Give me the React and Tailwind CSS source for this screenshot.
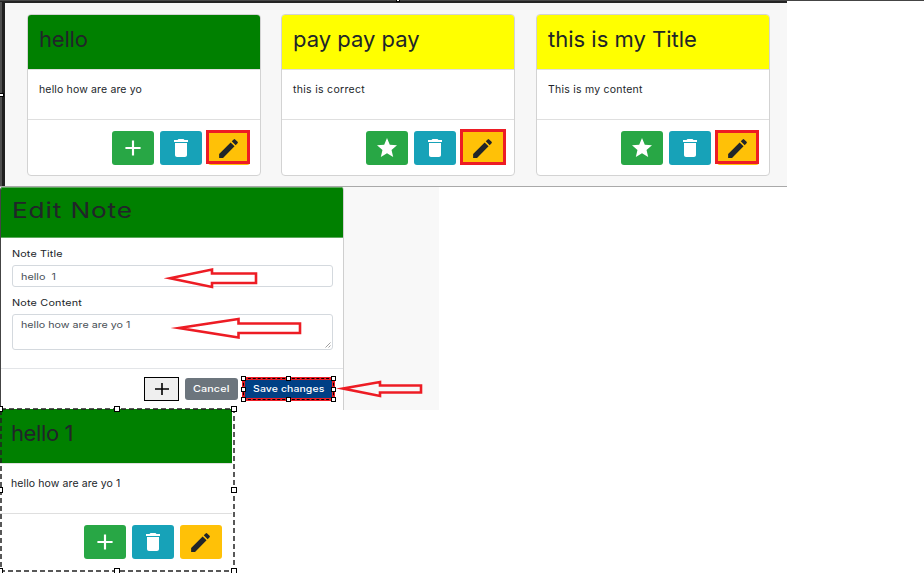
import React from "react";
import { MdAdd, MdDelete, MdEdit, MdStar } from "react-icons/md";

function NoteCard({ title, titleClass, text, textClass, color, icon: Icon, iconSize, box, className }) {
  return (
    <article className={`relative flex h-[162px] w-[234px] flex-none flex-col overflow-hidden rounded border border-[#d3d3d3] bg-white ${className}`}>
      <header className={`h-[55px] flex-none border-b border-[#dfdfdf] pl-[11px] pt-[8px] ${color}`}>
        <h2 className={`text-[22px] leading-[32px] whitespace-nowrap text-[#212529] ${titleClass}`}>{title}</h2>
      </header>
      <div className="h-[50px] flex-none border-b border-[#dfdfdf] pl-[11px] pt-[12px]">
        <p className={`whitespace-nowrap text-[10.5px] leading-[16px] text-[#212529] ${textClass}`}>{text}</p>
      </div>
      <footer className="flex flex-1 justify-end gap-[6px] pr-[10px] pt-[11px]">
        <button className="flex h-[34px] w-[42px] items-center justify-center rounded-[3px] bg-[#28a745] text-white"><Icon size={iconSize} /></button>
        <button className="flex h-[34px] w-[42px] items-center justify-center rounded-[3px] bg-[#17a2b8] text-white"><MdDelete size={24} /></button>
        <button className="flex h-[34px] w-[42px] items-center justify-center rounded-[3px] bg-[#ffc107] pr-[2px] text-[#212529]"><MdEdit size={25} /></button>
      </footer>
      {box && <span className={`absolute border-[3px] border-[#ed1c24] ${box}`} />}
    </article>
  );
}

function Handle({ className }) {
  return <span className={`absolute border border-black bg-white ${className}`} />;
}

export default function App() {
  return (
    <main className="relative flex h-[573px] w-[924px] flex-col overflow-hidden bg-white font-[Inter,sans-serif]">
      <section className="flex h-[187px] flex-none">
        <div className="flex w-[787px] border-b border-[#a9a9a9] bg-[#f7f7f7] shadow-[inset_0_1px_0_#484848,inset_0_3px_0_#242424]">
          <div className="mt-[2px] w-[5px] flex-none border-l-[2px] border-[#505050] bg-[#202020]" />
          <div className="flex pl-[22px] pt-[14px]">
            <NoteCard title="hello" titleClass="tracking-[-0.2px]" text="hello how are are yo" textClass="tracking-[0.15px]" color="bg-[#008000]" icon={MdAdd} iconSize={26} box="left-[178px] top-[115px] h-[34px] w-[44px]" className="mr-[20px]" />
            <NoteCard title="pay pay pay" titleClass="tracking-[0px]" text="this is correct" textClass="tracking-[0.3px]" color="bg-[#ffff00]" icon={MdStar} iconSize={24} box="left-[178px] top-[114px] h-[36px] w-[46px]" className="mr-[21px]" />
            <NoteCard title="this is my Title" titleClass="tracking-[0px]" text="This is my content" textClass="tracking-[0.23px]" color="bg-[#ffff00]" icon={MdStar} iconSize={24} box="left-[178px] top-[115px] h-[34px] w-[44px]" className="" />
          </div>
        </div>
        <div className="h-px flex-1 bg-[#444]" />
      </section>

      <section className="flex h-[223px] w-[439px] flex-none bg-[#f8f8f8]">
        <form className="flex w-[344px] flex-none flex-col overflow-hidden rounded-t-[3px] border-x border-[#cfcfcf] border-l-[#444] bg-white">
          <header className="h-[51px] flex-none border-t border-b border-[#5caa5c] bg-[#008000] pl-[11px] pt-[6px]">
            <h1 className="w-max origin-left scale-x-[1.22] whitespace-nowrap text-[21.5px] leading-[32px] tracking-[0.7px] text-[#212529]">Edit Note</h1>
          </header>
          <div className="flex h-[131px] flex-none flex-col border-b border-[#e3e5e8] pl-[11px] pr-[10px] pt-[9px] text-[#212529]">
            <label className="h-[18px] origin-left scale-x-[1.2] text-[9px] leading-[13px] tracking-[0.1px]">Note Title</label>
            <div className="h-[22px] flex-none whitespace-pre rounded-[3px] border border-[#d4d9de] pl-[8px] text-[#495057]">
              <span className="inline-block origin-left scale-x-[1.2] align-top text-[9px] leading-[22px]">hello  1</span>
            </div>
            <label className="mt-[9px] h-[18px] flex-none origin-left scale-x-[1.2] text-[9px] leading-[13px] tracking-[0.16px]">Note Content</label>
            <div className="relative h-[36px] flex-none rounded-[3px] border border-[#d4d9de] pl-[8px] text-[#495057]">
              <span className="inline-block origin-left scale-x-[1.19] align-top text-[9px] leading-[20px]">hello how are are yo 1</span>
              <svg className="absolute right-px bottom-px h-[6px] w-[6px]" viewBox="0 0 6 6" stroke="#888" strokeWidth="0.8"><path d="M0.5 5.5 5.5 0.5M3.5 5.5 5.5 3.5" /></svg>
            </div>
          </div>
          <footer className="flex flex-1 pl-[143px] pt-[8px]">
            <button type="button" className="flex h-[24px] w-[35px] items-center justify-center border border-black bg-[#efefef]">
              <svg className="h-[14px] w-[16px]" viewBox="0 0 16 14" stroke="#000" strokeWidth="1.6"><path d="M1 7H15M8 1V13" /></svg>
            </button>
            <button type="button" className="ml-[6px] mt-px flex h-[22px] w-[53px] items-center justify-center rounded-[3px] bg-[#6c757d] text-[9px] leading-[22px] font-medium text-white"><span className="scale-x-[1.2] tracking-[0.1px]">Cancel</span></button>
            <button type="button" className="relative ml-[4px] flex h-[24px] w-[93px] items-center justify-center border-[3px] border-[#ed1c24] bg-[#004085] text-[9px] font-medium whitespace-nowrap text-white">
              <span className="scale-x-[1.16] tracking-[0.1px]">Save changes</span>
              <span className="absolute -inset-[2px] border border-dashed border-black" />
              <Handle className="-left-[4px] -top-[4px] size-[5px]" />
              <Handle className="left-[41px] -top-[4px] size-[5px]" />
              <Handle className="-right-[4px] -top-[4px] size-[5px]" />
              <Handle className="-left-[4px] top-[7px] size-[5px]" />
              <Handle className="-right-[4px] top-[7px] size-[5px]" />
              <Handle className="-left-[4px] -bottom-[4px] size-[5px]" />
              <Handle className="left-[41px] -bottom-[4px] size-[5px]" />
              <Handle className="-right-[4px] -bottom-[4px] size-[5px]" />
            </button>
          </footer>
        </form>
      </section>

      <section className="relative -mt-[2px] h-[165px] w-[236px] flex-none">
        <NoteCard title="hello 1" titleClass="tracking-[-0.4px]" text="hello how are are yo 1" textClass="tracking-[0.1px]" color="bg-[#008000]" icon={MdAdd} iconSize={26} className="!rounded-none !border-l-0 !border-r-white !border-y-white pr-px" />
        <svg className="absolute left-0 top-0 h-[165px] w-[236px]" viewBox="0 0 236 165" fill="none" stroke="#222" strokeWidth="1.5" strokeDasharray="5 3">
          <path d="M1 1H234V163H1Z" />
        </svg>
        <Handle className="-left-[3px] -top-[2px] size-[6px]" />
        <Handle className="left-[114px] -top-[2px] size-[6px]" />
        <Handle className="left-[231px] -top-[2px] size-[6px]" />
        <Handle className="-left-[3px] top-[79px] size-[6px]" />
        <Handle className="left-[231px] top-[79px] size-[6px]" />
        <Handle className="-left-[3px] top-[160px] size-[6px]" />
        <Handle className="left-[114px] top-[160px] size-[6px]" />
        <Handle className="left-[231px] top-[160px] size-[6px]" />
      </section>

      <svg className="pointer-events-none absolute left-0 top-0 h-[573px] w-[924px]" viewBox="0 0 924 573" fill="none" stroke="#ed1c24" strokeWidth="2.6" strokeMiterlimit="12">
        <path d="M170 278.300 212 269.500V273.500H256V283H212V287Z" />
        <path d="M179 328 238.500 319V323.500H300V333H238.500V337.500Z" />
        <path d="M343 388.500 380 382V385.500H421V392.500H380V396Z" />
      </svg>
      <Handle className="-left-px top-[93px] h-[4px] w-[5px]" />
      <Handle className="left-[396px] -top-[2px] h-[4px] w-[4px]" />
    </main>
  );
}
